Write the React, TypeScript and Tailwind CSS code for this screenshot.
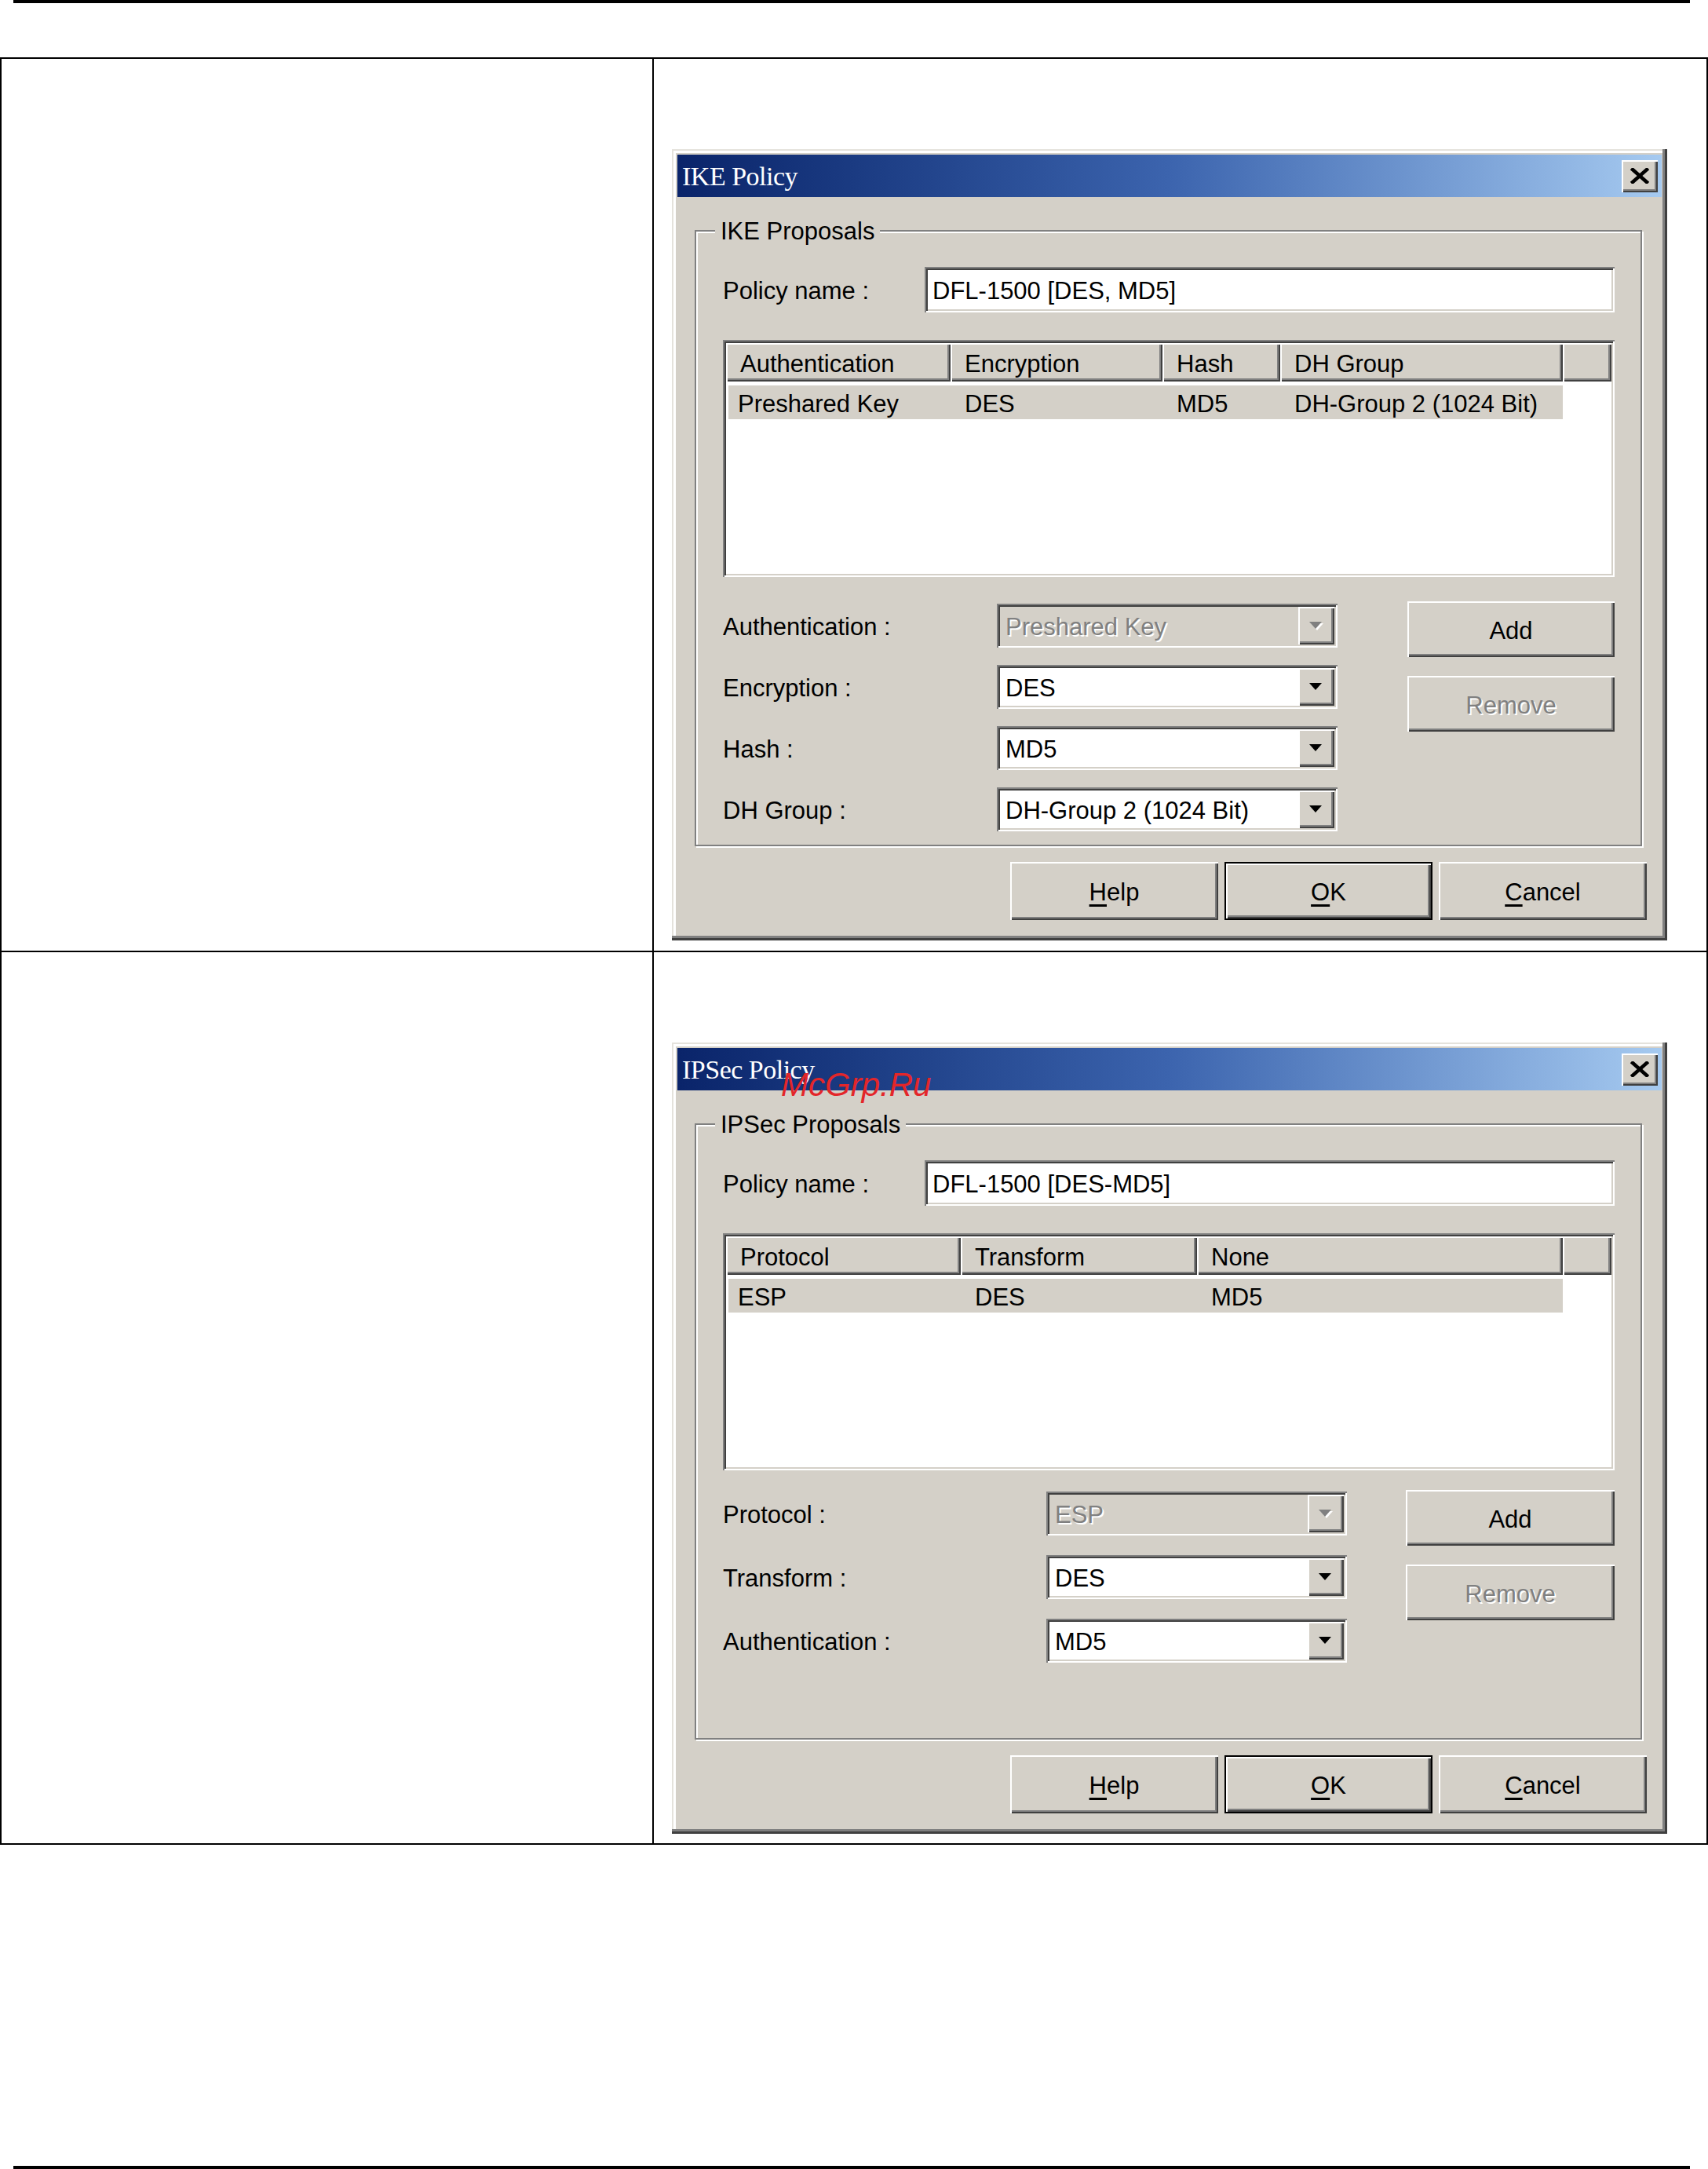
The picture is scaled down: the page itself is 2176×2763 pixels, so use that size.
import React from "react";

// classic win2k 3D edges
const raised =
  "shadow-[inset_2px_2px_0_#fff,inset_-2px_-2px_0_#404040,inset_-4px_-4px_0_#808080]";
const sunken =
  "shadow-[inset_2px_2px_0_#808080,inset_-2px_-2px_0_#fff,inset_4px_4px_0_#404040,inset_-4px_-4px_0_#d4d0c8]";
const disabledText = "text-[#808080] [text-shadow:2px_2px_0_#fff]";
// nudge text a little lower, like the bitmap font in the shot
const low = "pt-[5px]";

type Column = { head: string; cell: string; w: string };
type Field = { label: string; value: string; disabled?: boolean };

type DialogData = {
  title: string;
  legend: string;
  policy: string;
  columns: Column[];
  fields: Field[];
  formTop: string;
  labelW: string;
  comboW: string;
  rowGap: string;
  btnCol: string;
  watermark?: boolean;
};

const IKE: DialogData = {
  title: "IKE Policy",
  legend: "IKE Proposals",
  policy: "DFL-1500 [DES, MD5]",
  columns: [
    { head: "Authentication", cell: "Preshared Key", w: "w-[286px]" },
    { head: "Encryption", cell: "DES", w: "w-[270px]" },
    { head: "Hash", cell: "MD5", w: "w-[150px]" },
    { head: "DH Group", cell: "DH-Group 2 (1024 Bit)", w: "w-[360px]" },
  ],
  fields: [
    { label: "Authentication :", value: "Preshared Key", disabled: true },
    { label: "Encryption :", value: "DES" },
    { label: "Hash :", value: "MD5" },
    { label: "DH Group :", value: "DH-Group 2 (1024 Bit)" },
  ],
  formTop: "mt-[34px]",
  labelW: "w-[349px]",
  comboW: "w-[434px]",
  rowGap: "gap-[22px]",
  btnCol: "ml-[89px] w-[264px] -mt-[3px]",
};

const IPSEC: DialogData = {
  title: "IPSec Policy",
  legend: "IPSec Proposals",
  policy: "DFL-1500 [DES-MD5]",
  columns: [
    { head: "Protocol", cell: "ESP", w: "w-[299px]" },
    { head: "Transform", cell: "DES", w: "w-[301px]" },
    { head: "None", cell: "MD5", w: "w-[466px]" },
  ],
  fields: [
    { label: "Protocol :", value: "ESP", disabled: true },
    { label: "Transform :", value: "DES" },
    { label: "Authentication :", value: "MD5" },
  ],
  formTop: "mt-[27px]",
  labelW: "w-[412px]",
  comboW: "w-[383px]",
  rowGap: "gap-[25px]",
  btnCol: "ml-[75px] w-[266px] -mt-[2px]",
  watermark: true,
};

const Arrow = ({ disabled }: { disabled?: boolean }) => (
  <svg width="18" height="11" viewBox="0 0 18 11">
    {disabled ? <path d="M2 2h16L10 11z" fill="#fff" /> : null}
    <path d="M0 0h16L8 9z" fill={disabled ? "#808080" : "#000"} />
  </svg>
);

const Combo = ({ field, w }: { field: Field; w: string }) => (
  <div
    className={`${w} h-[56px] flex items-center p-[4px] ${sunken} ${
      field.disabled ? "bg-[#d4d0c8]" : "bg-white"
    }`}
  >
    <span className={`flex-1 pl-[7px] ${low} ${field.disabled ? disabledText : ""}`}>
      {field.value}
    </span>
    <span
      className={`w-[46px] h-full flex items-center justify-center bg-[#d4d0c8] ${raised}`}
    >
      <Arrow disabled={field.disabled} />
    </span>
  </div>
);

const Button = ({
  children,
  className = "",
  disabled,
  isDefault,
}: {
  children: React.ReactNode;
  className?: string;
  disabled?: boolean;
  isDefault?: boolean;
}) => (
  <div
    className={`${className} flex items-center justify-center bg-[#d4d0c8] ${
      isDefault ? "border-2 border-black" : ""
    } ${raised} ${disabled ? disabledText : ""}`}
  >
    <span className={low}>{children}</span>
  </div>
);

const Dialog = ({ data }: { data: DialogData }) => (
  <div className="relative w-[1268px] h-[1008px] p-[7px] flex flex-col bg-[#d4d0c8] shadow-[inset_-3px_-3px_0_#404040,inset_-6px_-6px_0_#808080,inset_2px_2px_0_#e4e2dc,inset_5px_5px_0_#fff]">
    {/* title bar */}
    <div className="h-[54px] flex items-center justify-between pl-[6px] pr-[5px] bg-linear-to-r from-[#0a246a] via-[#3c64ae] to-[#a6caf0]">
      <span className="text-white text-[34px] font-['Liberation_Serif','Times_New_Roman',serif] tracking-[-0.5px]">
        {data.title}
      </span>
      <span
        className={`w-[46px] h-[41px] flex items-center justify-center bg-[#d4d0c8] ${raised}`}
      >
        <svg width="26" height="20" viewBox="0 0 26 20">
          <path
            d="M4 2L22 18M22 2L4 18"
            stroke="#000"
            strokeWidth="4.5"
            strokeLinecap="square"
          />
        </svg>
      </span>
    </div>

    {/* group box */}
    <div className="relative mt-[42px] ml-[22px] w-[1207px] h-[785px] border-2 border-[#808080] shadow-[inset_2px_2px_0_#fff,2px_2px_0_#fff] pt-[45px] pl-[34px] pr-[33px]">
      <span className="absolute left-[24px] top-[-18px] px-[7px] bg-[#d4d0c8] leading-[36px]">
        {data.legend}
      </span>

      <div className="flex h-[58px] items-center">
        <span className={`w-[257px] ${low}`}>Policy name :</span>
        <div className={`flex-1 h-full flex items-center bg-white pl-[10px] ${sunken}`}>
          <span className={low}>{data.policy}</span>
        </div>
      </div>

      {/* list view */}
      <div className={`mt-[35px] h-[302px] bg-white p-[4px] ${sunken}`}>
        <div className="flex h-[49px]">
          {data.columns.map((c) => (
            <div
              key={c.head}
              className={`${c.w} h-full flex items-center pl-[18px] bg-[#d4d0c8] ${raised}`}
            >
              <span className={low}>{c.head}</span>
            </div>
          ))}
          <div className={`flex-1 h-full bg-[#d4d0c8] ${raised}`} />
        </div>
        <div className="flex h-[43px] mt-[5px] ml-[3px]">
          {data.columns.map((c, i) => (
            <div
              key={c.head}
              className={`${c.w} h-full flex items-center bg-[#d4d0c8] ${
                i === 0 ? "pl-[12px] -mr-[3px]" : "pl-[18px]"
              }`}
            >
              <span className={low}>{c.cell}</span>
            </div>
          ))}
        </div>
      </div>

      {/* fields */}
      <div className={`${data.formTop} flex items-start`}>
        <div className={`flex flex-col ${data.rowGap}`}>
          {data.fields.map((f) => (
            <div key={f.label} className="flex items-center h-[56px]">
              <span className={`${data.labelW} ${low}`}>{f.label}</span>
              <Combo field={f} w={data.comboW} />
            </div>
          ))}
        </div>
        <div className={`${data.btnCol} flex flex-col gap-[24px]`}>
          <Button className="h-[71px]">Add</Button>
          <Button className="h-[71px]" disabled>
            Remove
          </Button>
        </div>
      </div>
    </div>

    {/* bottom buttons */}
    <div className="mt-[20px] flex justify-end gap-[8px] pr-[19px]">
      <Button className="w-[265px] h-[74px]">
        <span className="underline underline-offset-[5px]">H</span>elp
      </Button>
      <Button className="w-[265px] h-[74px]" isDefault>
        <span className="underline underline-offset-[5px]">O</span>K
      </Button>
      <Button className="w-[265px] h-[74px]">
        <span className="underline underline-offset-[5px]">C</span>ancel
      </Button>
    </div>

    {data.watermark ? (
      <span className="absolute left-[139px] top-[33px] text-[42px] leading-none italic text-[#e3262a] font-['Liberation_Sans',Arial,sans-serif]">
        McGrp.Ru
      </span>
    ) : null}
  </div>
);

export default function App() {
  return (
    <div className="w-[2176px] h-[2763px] bg-white text-black text-[31px] font-['Liberation_Sans',Arial,sans-serif]">
      <div className="ml-[17px] w-[2136px] h-[4px] bg-black" />

      <div className="mt-[69px] w-[2176px] border-2 border-black">
        <div className="flex h-[1138px] border-b-2 border-black">
          <div className="w-[831px] border-r-2 border-black" />
          <div className="flex-1 pl-[23px] pt-[115px]">
            <Dialog data={IKE} />
          </div>
        </div>
        <div className="flex h-[1135px]">
          <div className="w-[831px] border-r-2 border-black" />
          <div className="flex-1 pl-[23px] pt-[115px]">
            <Dialog data={IPSEC} />
          </div>
        </div>
      </div>

      <div className="mt-[409px] ml-[17px] w-[2136px] h-[4px] bg-black" />
    </div>
  );
}
